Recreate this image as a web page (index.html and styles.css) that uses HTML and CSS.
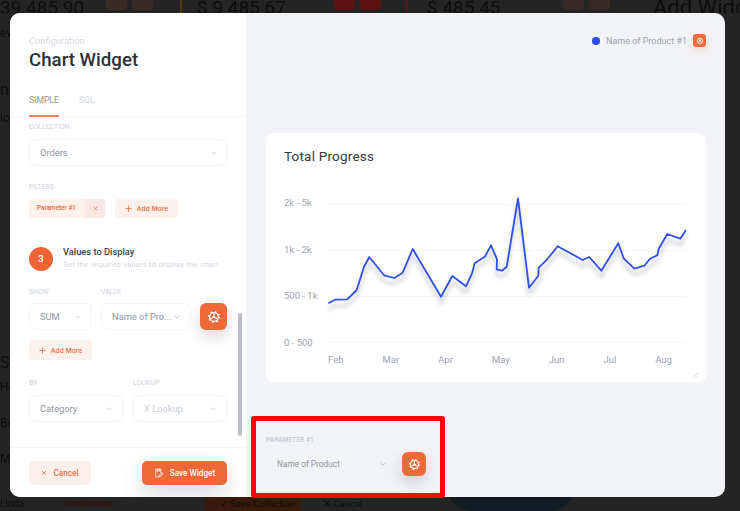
FILE: index.html
```html
<!DOCTYPE html>
<html lang="en">
<head>
<meta charset="utf-8">
<title>Chart Widget</title>
<link rel="stylesheet" href="styles.css">
</head>
<body>
<svg class="defs" width="0" height="0" aria-hidden="true">
  <symbol id="gear" viewBox="0 0 24 24"><circle cx="12" cy="12" r="7.5" fill="none" stroke="currentColor" stroke-width="2.2"/><circle cx="12" cy="12" r="9.500" fill="none" stroke="currentColor" stroke-width="1.800" stroke-dasharray="3 4.460"/><circle cx="12" cy="12" r="2.200" fill="currentColor"/><path d="M12 5v7M12 12l6 3.500M12 12l-6 3.500" stroke="currentColor" stroke-width="1.800"/></symbol>
  <symbol id="chev" viewBox="0 0 10 6"><path d="M1 1l4 4 4-4" fill="none" stroke="currentColor" stroke-width="1.100"/></symbol>
  <symbol id="plus" viewBox="0 0 10 10"><path d="M5 .5v9M.5 5h9" fill="none" stroke="currentColor" stroke-width="1.200"/></symbol>
  <symbol id="cross" viewBox="0 0 10 10"><path d="M1.500 1.500l7 7M8.500 1.500l-7 7" fill="none" stroke="currentColor" stroke-width="1.400"/></symbol>
</svg>
<div class="backdrop">
  <div class="bd-top">
    <span class="bd-num bd-n1">39 485 90</span>
    <span class="bd-chips faint"><i></i><i></i></span>
    <span class="bd-rule amber"></span>
    <span class="bd-num">$ 9 485 67</span>
    <span class="bd-chips"><i></i><i></i></span>
    <span class="bd-rule"></span>
    <span class="bd-num">$ 485 45</span>
    <span class="bd-chips faint"><i></i><i></i></span>
    <span class="bd-num bd-title">Add Widget</span>
  </div>
  <div class="bd-left"><span class="l1">eve</span><span class="l2">nn</span><span class="l3">io.</span><span class="l4">S</span><span class="l5">Hot</span><span class="l6">Be</span><span class="l7">Ma</span></div>
  <div class="bd-bottom">
    <span class="bd-name">Linda</span>
    <span class="bd-tag">CONCLUSION</span>
    <span class="bd-save">&#10003; Save Collection</span>
    <span class="bd-gap"></span>
    <span class="bd-cancel">&#10005; Cancel</span>
    <span class="bd-donut"></span>
  </div>
</div>
<main class="modal">
  <section class="side">
    <header class="side-head">
      <div class="eyebrow">Configuration</div>
      <h1>Chart Widget</h1>
      <nav class="tabs"><span class="tab on">SIMPLE</span><span class="tab">SQL</span></nav>
    </header>
    <div class="side-body">
      <div class="scroll-thumb"></div>
      <label class="lab lab-first">COLLECTION</label>
      <div class="sel sel-orders"><span>Orders</span><svg class="chev"><use href="#chev"/></svg></div>
      <label class="lab lab-filters">FILTERS</label>
      <div class="chips">
        <div class="chip"><span class="chip-t">Parameter #1</span><span class="chip-x"><svg><use href="#cross"/></svg></span></div>
        <div class="add add-1"><svg><use href="#plus"/></svg>Add More</div>
      </div>
      <div class="step">
        <div class="step-n">3</div>
        <div><div class="step-t">Values to Display</div><div class="step-s">Set the required values to display the chart</div></div>
      </div>
      <div class="row row-show">
        <div class="fld f-sum"><label class="lab">SHOW</label><div class="sel"><span>SUM</span><svg class="chev"><use href="#chev"/></svg></div></div>
        <div class="fld f-val"><label class="lab">VALUE</label><div class="sel"><span>Name of Pro...</span><svg class="chev"><use href="#chev"/></svg></div></div>
        <div class="gear-btn"><svg><use href="#gear"/></svg></div>
      </div>
      <div class="add add-2"><svg><use href="#plus"/></svg>Add More</div>
      <div class="row row-by">
        <div class="fld f-half"><label class="lab">BY</label><div class="sel"><span>Category</span><svg class="chev"><use href="#chev"/></svg></div></div>
        <div class="fld f-half"><label class="lab">LOOKUP</label><div class="sel dim"><span>X Lookup</span><svg class="chev"><use href="#chev"/></svg></div></div>
      </div>
    </div>
    <footer class="side-foot">
      <div class="btn-cancel"><svg><use href="#cross"/></svg>Cancel</div>
      <div class="btn-save"><svg viewBox="0 0 14 14" fill="none" stroke="currentColor" stroke-width="1.200"><path d="M9.500 7V1.500h-7v11h4M4.500 1.500v3h3v-3M6.500 12.500l1-2.500 4-3.500 1.500 1.500-4 3.500z"/></svg>Save Widget</div>
    </footer>
  </section>
  <section class="main">
    <div class="legend"><span class="dot"></span><span class="leg-t">Name of Product #1</span><span class="mini-gear"><svg><use href="#gear"/></svg></span></div>
    <article class="card">
      <h2>Total Progress</h2>
      <div class="chart">
        <div class="ylabels"><span>2k - 5k</span><span>1k - 2k</span><span>500 - 1k</span><span>0 - 500</span></div>
        <svg class="plot" viewBox="0 0 360 160" width="360" height="160">
          <defs><filter id="sh" x="-5%" y="-20%" width="110%" height="150%"><feGaussianBlur stdDeviation="2"/></filter></defs>
          <g stroke="#f6f7f9" stroke-width="1"><path d="M0 17.500H358M0 63.500H358M0 109.500H358M0 155.500H358"/></g>
          <polyline class="line-sh" filter="url(#sh)" transform="translate(0 6)" points="0.300,116.300 7,112.700 19.300,112.300 28.700,103 36,79.700 41.300,70 56,88.300 66.300,91 74.700,85.700 84.700,62 113,109.700 124.300,89 138,99.300 144,86.300 146.700,76.300 157,69.500 163,58.300 169,72.300 168.700,82.300 174,83.700 178.700,79.700 190,11.300 201,100.700 210.300,88.700 210.700,80.700 218,73.700 229.700,59.300 254.700,73 261.300,70 273.300,83.700 290.300,56.300 295.700,71.300 306.300,81.700 316.300,78.700 322,71.700 329.300,68.300 330.700,61.700 339.300,47 352.300,51.700 358,43"/>
          <polyline class="line" points="0.300,116.300 7,112.700 19.300,112.300 28.700,103 36,79.700 41.300,70 56,88.300 66.300,91 74.700,85.700 84.700,62 113,109.700 124.300,89 138,99.300 144,86.300 146.700,76.300 157,69.500 163,58.300 169,72.300 168.700,82.300 174,83.700 178.700,79.700 190,11.300 201,100.700 210.300,88.700 210.700,80.700 218,73.700 229.700,59.300 254.700,73 261.300,70 273.300,83.700 290.300,56.300 295.700,71.300 306.300,81.700 316.300,78.700 322,71.700 329.300,68.300 330.700,61.700 339.300,47 352.300,51.700 358,43"/>
        </svg>
      </div>
      <div class="months"><span>Feb</span><span>Mar</span><span>Apr</span><span>May</span><span>Jun</span><span>Jul</span><span>Aug</span></div>
      <svg class="grip" viewBox="0 0 6 6"><path d="M0 6L6 0M3 6L6 3" stroke="#c3c8d2" stroke-width=".8"/></svg>
    </article>
    <div class="param">
      <label class="lab">PARAMETER #1</label>
      <div class="param-row">
        <div class="sel sel-param"><span>Name of Product</span><svg class="chev"><use href="#chev"/></svg></div>
        <div class="gear-btn gear-sm"><svg><use href="#gear"/></svg></div>
      </div>
    </div>
  </section>
</main>
<div class="annotation"></div>
</body>
</html>
```
FILE: styles.css
```css
* { box-sizing: border-box; }
html, body { margin: 0; height: 100%; }
body { position: relative; width: 740px; height: 511px; overflow: hidden; background: #242424; font-family: Roboto, "Noto Sans", sans-serif; color: #2a2f3a; }
.defs { position: absolute; }
svg { display: block; }

.backdrop { height: 511px; display: flex; flex-direction: column; filter: blur(.6px); color: #0d0d0e; overflow: hidden; }
.bd-top { height: 13px; flex: none; display: grid; grid-template-columns: 106px 74px 17px 137px 72px 21px 136px 90px 1fr; overflow: hidden; }
.bd-num { font-size: 19px; line-height: 16px; white-space: nowrap; }
.bd-n1 { text-align: right; padding-right: 23px; direction: rtl; unicode-bidi: plaintext; }
.bd-title { font-size: 22px; }
.bd-chips { display: flex; gap: 5px; }
.bd-chips i { width: 21px; height: 10px; background: #5c120e; border-radius: 0 0 4px 4px; }
.bd-chips.faint i { background: #3a2a24; }
.bd-rule { width: 2px; height: 13px; background: #5e1410; }
.bd-rule.amber { background: #4d3a10; }
.bd-left { flex: 1; width: 10px; overflow: hidden; display: flex; flex-direction: column; font-size: 12px; line-height: 12px; white-space: nowrap; }
.bd-left span { display: block; width: 24px; }
.l1 { margin-top: 14px; }
.l2 { margin-top: 45px; font-size: 16px; }
.l3 { margin-top: 16px; }
.l4 { margin-top: 233px; font-size: 16px; }
.l5 { margin-top: 12px; }
.l6 { margin-top: 24px; }
.l7 { margin-top: 24px; }
.bd-bottom { height: 14px; flex: none; display: grid; grid-template-columns: 63px 142px 96px 22px 123px 129px; align-items: stretch; font-size: 10px; line-height: 14px; white-space: nowrap; overflow: hidden; }
.bd-tag { color: #3a0d0c; font-size: 8px; font-weight: 500; }
.bd-save { background: #391a0c; padding-left: 15px; color: #0f0d0c; font-size: 9.500px; border-radius: 3px 3px 0 0; overflow: hidden; }
.bd-cancel { font-size: 9.500px; color: #0f0d0d; }
.bd-donut { height: 26px; margin-top: -12px; border-radius: 0 0 65px 65px; background: #101d26; }

.modal { position: absolute; left: 10px; top: 13px; width: 715px; height: 484px; display: flex; border-radius: 10px; overflow: hidden; background: #f2f3f7; }

.side { width: 236px; background: #fff; display: flex; flex-direction: column; }
.side-head { padding: 21px 0 0 19px; height: 104px; flex: none; border-bottom: 1px solid #f4f5f8; }
.eyebrow { font-size: 9.300px; line-height: 14px; color: #d3d7df; }
h1 { margin: 0; font-size: 18.700px; line-height: 24px; font-weight: 500; color: #2b303b; }
.tabs { display: flex; gap: 20px; margin-top: 18px; }
.tab { font-size: 8.600px; line-height: 12px; color: #d3d7df; height: 27px; padding-top: 4px; }
.tab.on { color: #8c92a1; border-bottom: 2px solid #f0845f; width: 30px; }

.side-body { position: relative; flex: 1; padding: 0 19px; min-height: 0; }
.scroll-thumb { position: absolute; right: 4px; top: 196px; width: 4px; height: 123px; border-radius: 2px; background: #b9bdc7; }
.lab { display: block; font-size: 6.900px; line-height: 10px; color: #ccd1da; }
.lab-first { margin-top: 5px; }
.lab-filters { margin-top: 16px; }
.sel { height: 27px; border: 1px solid #f5f6f9; border-radius: 6px; display: flex; align-items: center; justify-content: space-between; padding: 0 10px; font-size: 9.300px; color: #8d93a2; background: #fff; white-space: nowrap; margin-top: 6px; }
.sel-orders { margin-top: 7px; padding-right: 9px; }
.sel.dim { color: #c9ced8; }
.chev { width: 6px; height: 4px; color: #aab0bc; flex: none; }

.chips { display: flex; gap: 10px; margin-top: 7px; }
.chip { display: flex; height: 19px; width: 76px; border-radius: 4px; overflow: hidden; background: #fdf1ec; }
.chip-t { flex: 1; font-size: 6.400px; line-height: 19px; padding-left: 8px; color: #ee6a3e; font-weight: 500; white-space: nowrap; }
.chip-x { width: 20px; background: #f9e8e1; display: flex; align-items: center; justify-content: center; color: #ee6a3e; }
.chip-x svg { width: 5px; height: 5px; }
.add { display: flex; align-items: center; gap: 5px; height: 19px; border-radius: 4px; background: #fdf1ec; color: #f0744a; font-size: 7.200px; font-weight: 500; justify-content: center; white-space: nowrap; }
.add svg { width: 7px; height: 7px; }
.add-1 { width: 63px; }
.add-2 { width: 63px; margin-top: 10px; height: 20px; }

.step { display: flex; align-items: center; gap: 10px; margin-top: 28px; }
.step-n { width: 24px; height: 24px; border-radius: 50%; background: #ee6434; color: #fff; font-size: 9.500px; font-weight: 500; display: flex; align-items: center; justify-content: center; flex: none; }
.step-t { font-size: 9.300px; line-height: 12px; font-weight: 500; color: #3a3f4a; }
.step-s { font-size: 8px; line-height: 12px; color: #d3d7df; white-space: nowrap; letter-spacing: .12px; margin-top: 1px; }

.row { display: flex; gap: 9px; align-items: flex-end; }
.row-show { margin-top: 16px; }
.row-by { margin-top: 18px; gap: 10px; }
.row-by .sel { margin-top: 7px; }
.f-sum { width: 63px; }
.f-val { width: 90px; }
.f-half { width: 94px; }
.gear-btn { width: 27px; height: 27px; border-radius: 6px; background: #ee6838; color: #fff; display: flex; align-items: center; justify-content: center; box-shadow: 0 7px 14px rgba(60, 60, 80, .18); flex: none; }
.gear-btn svg { width: 14px; height: 14px; }

.side-foot { height: 50px; flex: none; border-top: 1px solid #f6f7fa; padding: 13px 19px 0; display: flex; justify-content: space-between; }
.btn-cancel { width: 62px; height: 24px; border-radius: 5px; background: #fdefe9; color: #f0744a; font-size: 8.200px; font-weight: 500; display: flex; align-items: center; justify-content: center; gap: 6px; }
.btn-cancel svg { width: 6px; height: 6px; }
.btn-save { width: 85px; height: 24px; border-radius: 5px; background: #ee6838; color: #fff; font-size: 8.200px; font-weight: 500; display: flex; align-items: center; justify-content: center; gap: 6px; box-shadow: 0 10px 24px rgba(60, 60, 80, .2); white-space: nowrap; }
.btn-save svg { width: 10px; height: 10px; }

.main { flex: 1; position: relative; padding: 20px 20px 0; display: flex; flex-direction: column; }
.legend { display: flex; align-items: center; justify-content: flex-end; height: 15px; }
.dot { width: 8px; height: 8px; border-radius: 50%; background: #2a4df0; margin-right: 6px; }
.leg-t { font-size: 9px; color: #9ca2b0; white-space: nowrap; margin-right: 6px; }
.mini-gear { width: 13px; height: 13px; border-radius: 3px; background: #f06a3a; color: #fff; display: flex; align-items: center; justify-content: center; box-shadow: 0 4px 8px rgba(240, 106, 58, .2); }
.mini-gear svg { width: 8px; height: 8px; }

.card { position: relative; margin-top: 85px; height: 249px; background: #fff; border-radius: 7px; padding: 13px 18px 0; }
h2 { margin: 0; font-size: 13.500px; line-height: 21px; font-weight: 400; color: #343944; letter-spacing: .2px; }
.chart { display: flex; align-items: flex-start; margin-top: 20px; height: 160px; }
.ylabels { width: 44px; flex: none; display: flex; flex-direction: column; justify-content: space-between; font-size: 9.500px; line-height: 12px; color: #9ca2b0; padding-top: 10px; height: 162px; white-space: nowrap; }
.plot { overflow: visible; flex: none; }
.line { fill: none; stroke: #2f50ea; stroke-width: 1.800; stroke-linejoin: round; }
.line-sh { fill: none; stroke: #a9adb8; stroke-width: 2.500; opacity: .6; }
.months { display: flex; margin-left: 44px; margin-top: 7px; font-size: 9.500px; line-height: 12px; color: #9ca2b0; width: 344px; justify-content: space-between; }
.grip { position: absolute; right: 8px; bottom: 4px; width: 5px; height: 5px; }

.param { margin-top: 53px; }
.param .lab { color: #b9bec9; font-size: 6.700px; }
.param-row { display: flex; align-items: center; gap: 4px; margin-top: 7px; }
.sel-param { margin-top: 0; width: 132px; height: 24px; background: #f2f3f7; border-color: #eef0f4; font-size: 8.300px; padding: 0 11px 0 10px; }
.gear-sm { width: 24px; height: 24px; }
.gear-sm svg { width: 13px; height: 13px; }

.annotation { position: absolute; left: 251px; top: 416px; width: 194px; height: 82px; border: 5px solid #f00; border-radius: 3px; }
```
